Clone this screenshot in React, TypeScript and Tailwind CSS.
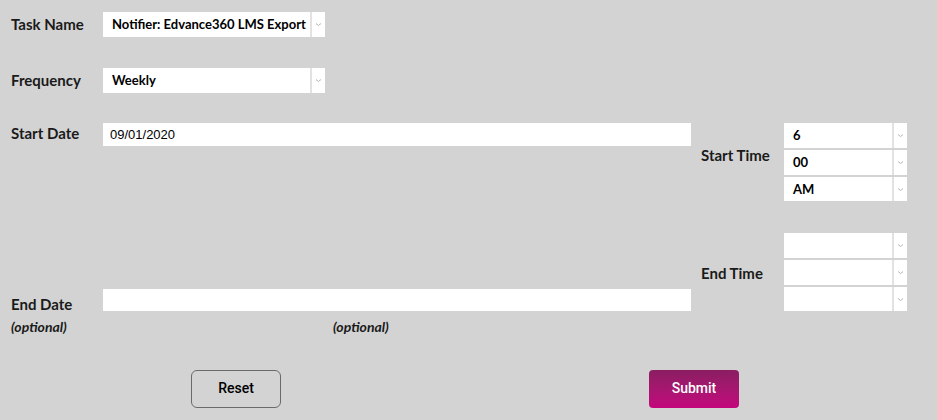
import type { ReactNode } from "react";

const LABEL = "font-['Lato',sans-serif] text-[15px] font-bold text-[#1a1a1a]";

function Chevron() {
  return (
    <svg width="7" height="5" viewBox="0 0 7 5" fill="none" stroke="#b5b5b5" strokeWidth="1">
      <path d="m1 1.5 2.5 2 2.5-2" />
    </svg>
  );
}

function FakeSelect({ value, w, h = 25 }: { value?: string; w: number; h?: number }) {
  return (
    <div className="flex gap-[2px] bg-[#e2e2e2]" style={{ width: w, height: h }}>
      <div className="flex flex-1 items-center whitespace-nowrap bg-white pl-[9px] pt-[1px] font-['Lato',sans-serif] text-[13px] font-bold text-black">
        {value}
      </div>
      <div className="flex w-[13px] items-center justify-center bg-white">
        <Chevron />
      </div>
    </div>
  );
}

function TextBox({ value, h }: { value?: string; h: number }) {
  return (
    <div
      className="flex w-[588px] items-center bg-white pl-[7px] font-['Liberation_Sans',sans-serif] text-[13px] text-black"
      style={{ height: h }}
    >
      {value}
    </div>
  );
}

function Label({ children, className = "" }: { children: ReactNode; className?: string }) {
  return <div className={`${LABEL} ${className}`}>{children}</div>;
}

export default function App() {
  return (
    <div className="h-[420px] w-[937px] bg-[#d3d3d3] pl-[11px] pt-[12px]">
      <div className="flex h-[25px] items-center">
        <Label className="w-[92px]">Task Name</Label>
        <FakeSelect w={222} value="Notifier: Edvance360 LMS Export" />
      </div>

      <div className="mt-[31px] flex h-[25px] items-center">
        <Label className="w-[92px]">Frequency</Label>
        <FakeSelect w={222} value="Weekly" />
      </div>

      <div className="mt-[30px] flex">
        <div className="flex w-[680px] flex-col">
          <div className="flex">
            <Label className="w-[92px] leading-[20px]">Start Date</Label>
            <TextBox h={23} value="09/01/2020" />
          </div>
          <div className="mt-[143px] flex">
            <Label className="w-[92px] pt-[4px]">End Date</Label>
            <TextBox h={22} />
          </div>
          <div className="mt-[1px] flex font-['Lato',sans-serif] text-[14px] leading-[20px] font-bold italic text-[#1a1a1a]">
            <span className="w-[322px]">(optional)</span>
            <span>(optional)</span>
          </div>
        </div>

        <div className="ml-[10px] flex flex-col">
          <div className="flex">
            <Label className="w-[83px] pt-[21px]">Start Time</Label>
            <div className="flex flex-col gap-[2px]">
              <FakeSelect w={123} value="6" />
              <FakeSelect w={123} value="00" />
              <FakeSelect w={123} h={24} value="AM" />
            </div>
          </div>
          <div className="mt-[32px] flex items-center">
            <Label className="w-[83px] pt-[2px]">End Time</Label>
            <div className="flex flex-col gap-[2px]">
              <FakeSelect w={123} />
              <FakeSelect w={123} />
              <FakeSelect w={123} h={24} />
            </div>
          </div>
        </div>
      </div>

      <div className="mt-[33px] flex">
        <button className="ml-[180px] h-[38px] w-[90px] rounded-[6px] border border-[#6a6a6a] font-['Roboto',sans-serif] text-[14px] font-medium text-black">
          Reset
        </button>
        <button className="ml-[368px] h-[38px] w-[90px] rounded-[4px] bg-gradient-to-b from-[#8a1d62] to-[#c4047d] font-['Roboto',sans-serif] text-[14px] font-medium text-white">
          Submit
        </button>
      </div>
    </div>
  );
}
